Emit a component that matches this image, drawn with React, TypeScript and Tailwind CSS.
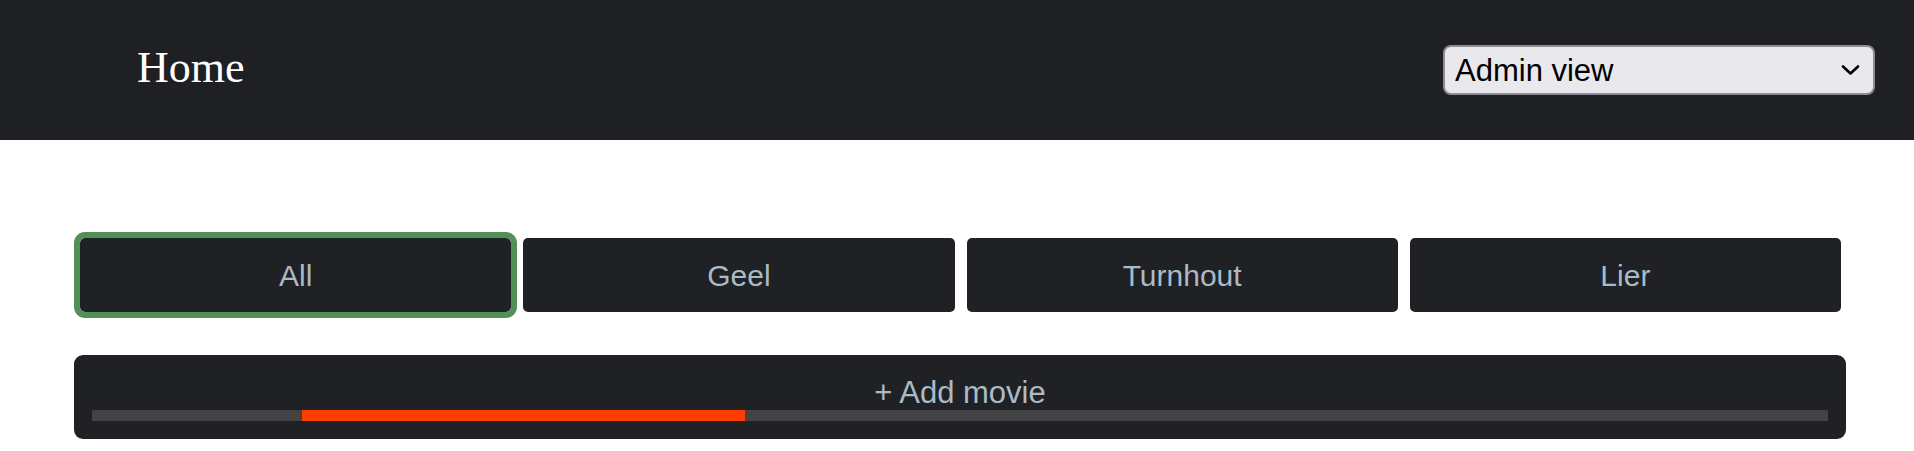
import { useState } from "react";

const LOCATIONS = ["All", "Geel", "Turnhout", "Lier"];

export default function App() {
  const [selected, setSelected] = useState("All");
  const [view, setView] = useState("admin");

  return (
    <div className="min-h-screen bg-white font-['Liberation_Sans',Arial,sans-serif]">
      <header className="flex h-[140px] items-center justify-between bg-[#1f2024] pl-[137px] pr-[39px]">
        <h1 className="pb-[4px] font-['Liberation_Serif','Times_New_Roman',serif] text-[44px] leading-none text-white">
          Home
        </h1>
        <div className="relative">
          <select
            value={view}
            onChange={(e) => setView(e.target.value)}
            className="h-[50px] w-[432px] appearance-none rounded-[8px] border-2 border-[#8e8c97] bg-[#e9e8ed] pl-[10px] text-[31px] leading-none text-black outline-none"
          >
            <option value="admin">Admin view</option>
            <option value="user">User view</option>
          </select>
          <svg
            className="pointer-events-none absolute right-[15px] top-[19px]"
            width="19"
            height="12"
            viewBox="0 0 19 12"
            fill="none"
          >
            <path d="M2 2.5L9.5 9.5L17 2.5" stroke="#000" strokeWidth="2.6" strokeLinecap="round" strokeLinejoin="round" />
          </svg>
        </div>
      </header>

      <main className="pl-[74px] pr-[68px] pt-[98px]">
        <div className="grid grid-cols-4 gap-3 pl-[6px] pr-[5px]">
          {LOCATIONS.map((loc) => (
            <button
              key={loc}
              type="button"
              onClick={() => setSelected(loc)}
              className={
                selected === loc
                  ? "h-[74px] rounded-[5px] bg-[#202125] text-[30px] text-[#a9bbc7] outline outline-[6px] outline-[#519158]"
                  : "h-[74px] rounded-[5px] bg-[#202125] text-[30px] text-[#a9bbc7]"
              }
            >
              {loc}
            </button>
          ))}
        </div>

        <div className="mt-[43px] flex h-[84px] flex-col rounded-[9px] bg-[#202125] px-[18px] pt-[20px]">
          <button type="button" className="h-[35px] text-[31px] leading-[35px] text-[#a9bbc7]">
            + Add movie
          </button>
          <div className="flex h-[11px] w-full bg-[#434345]">
            <div className="w-[12.1%]" />
            <div className="w-[25.5%] bg-[#ff3d00]" />
          </div>
        </div>
      </main>
    </div>
  );
}
